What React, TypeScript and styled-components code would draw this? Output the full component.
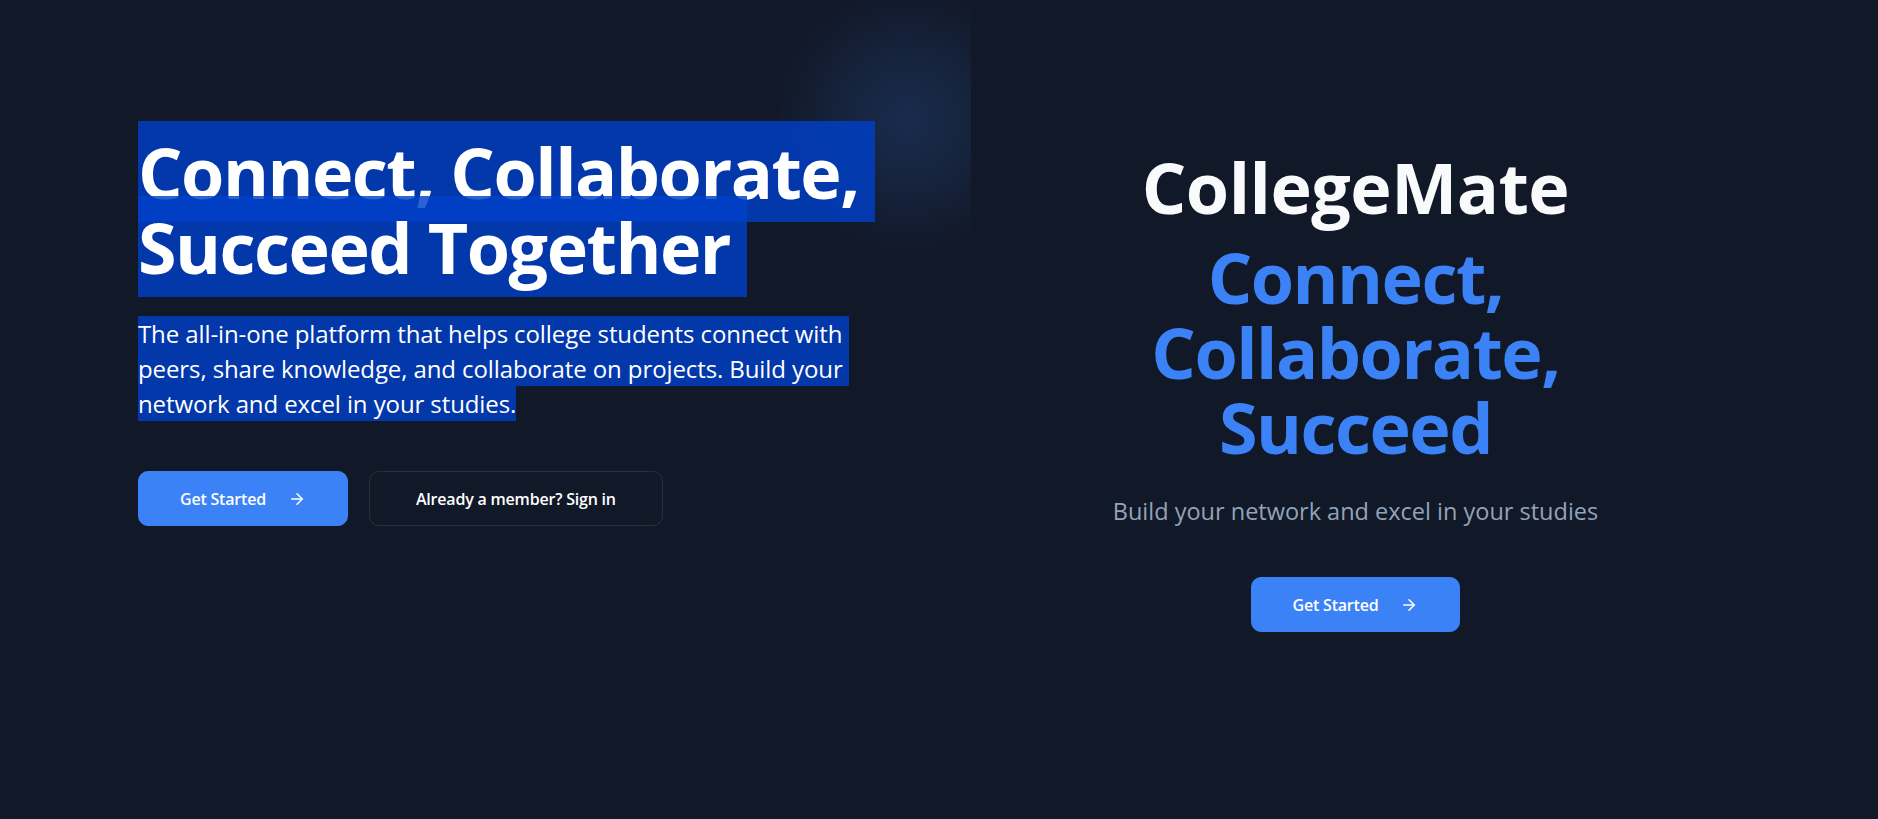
import styled, { createGlobalStyle } from 'styled-components';
import { ArrowRight } from 'lucide-react';

const GlobalStyle = createGlobalStyle`
  html, body {
    margin: 0;
    padding: 0;
    background: #111827;
  }
  body {
    font-family: "Open Sans", "Noto Sans", sans-serif;
    color: #ffffff;
  }
`;

const Page = styled.main`
  min-height: 100vh;
  box-sizing: border-box;
  background: #111827;
  display: grid;
  grid-template-columns: 1fr 1fr;
  column-gap: 64px;
  padding: 0 138px;
  overflow: hidden;
`;

const Intro = styled.section`
  position: relative;
  z-index: 0;
  padding-top: 134px;
`;

const Glow = styled.div`
  position: absolute;
  z-index: -1;
  left: 629px;
  top: -20px;
  width: 280px;
  height: 280px;
  border-radius: 50%;
  background: radial-gradient(circle, rgba(59, 130, 246, 0.19) 0%, rgba(59, 130, 246, 0.08) 42%, rgba(59, 130, 246, 0) 70%);
`;

const Headline = styled.h1`
  margin: 0;
  font-size: 70px;
  line-height: 75px;
  font-weight: 700;
  letter-spacing: -1.5px;
  color: #ffffff;
`;

const Mark = styled.span<{ $pad: number }>`
  background: rgba(0, 64, 200, 0.82);
  padding: ${(p) => p.$pad}px 0;
  white-space: pre;
`;

const Lead = styled.p`
  margin: 32px 0 0;
  font-size: 24px;
  line-height: 35px;
  letter-spacing: -0.1px;
  color: #ffffff;
`;

const Actions = styled.div`
  display: flex;
  gap: 21px;
  margin-top: 50px;
`;

const Button = styled.button<{ $variant?: 'primary' | 'ghost' }>`
  display: inline-flex;
  align-items: center;
  justify-content: center;
  gap: 22px;
  height: 55px;
  padding: 0 ${(p) => (p.$variant === 'ghost' ? 46 : 41)}px;
  box-sizing: border-box;
  border-radius: 10px;
  font-family: inherit;
  font-size: 16px;
  font-weight: 600;
  letter-spacing: -0.2px;
  color: #ffffff;
  cursor: pointer;
  background: ${(p) => (p.$variant === 'ghost' ? 'transparent' : '#3b82f6')};
  border: 1px solid ${(p) => (p.$variant === 'ghost' ? 'rgba(255, 255, 255, 0.1)' : '#3b82f6')};
`;

const Showcase = styled.section`
  position: relative;
  z-index: 1;
  background: #111827;
  display: flex;
  flex-direction: column;
  align-items: center;
  text-align: center;
  padding-top: 150px;
`;

const Brand = styled.h2`
  margin: 0;
  font-size: 70px;
  line-height: 75px;
  font-weight: 700;
  letter-spacing: -0.5px;
  color: #f9fafb;
`;

const Tagline = styled.h3`
  margin: 15px 0 0;
  font-size: 70px;
  line-height: 75px;
  font-weight: 700;
  letter-spacing: -1.5px;
  color: #3b82f6;
`;

const Sub = styled.p`
  margin: 30px 0 0;
  font-size: 23.5px;
  line-height: 32px;
  color: #94a3b8;
`;

const ShowcaseAction = styled.div`
  margin-top: 50px;
`;

export default function App() {
  return (
    <>
      <GlobalStyle />
      <Page>
        <Intro>
          <Glow />
          <Headline>
            <Mark $pad={2.5}>Connect, Collaborate, </Mark>
            <br />
            <Mark $pad={2.5}>Succeed Together </Mark>
          </Headline>
          <Lead>
            <Mark $pad={1.2}>The all-in-one platform that helps college students connect with </Mark>
            <br />
            <Mark $pad={1.2}>peers, share knowledge, and collaborate on projects. Build your </Mark>
            <br />
            <Mark $pad={1.2}>network and excel in your studies.</Mark>
          </Lead>
          <Actions>
            <Button>
              Get Started
              <ArrowRight size={18} strokeWidth={2} />
            </Button>
            <Button $variant="ghost">Already a member? Sign in</Button>
          </Actions>
        </Intro>
        <Showcase>
          <Brand>CollegeMate</Brand>
          <Tagline>
            Connect,
            <br />
            Collaborate,
            <br />
            Succeed
          </Tagline>
          <Sub>Build your network and excel in your studies</Sub>
          <ShowcaseAction>
            <Button>
              Get Started
              <ArrowRight size={18} strokeWidth={2} />
            </Button>
          </ShowcaseAction>
        </Showcase>
      </Page>
    </>
  );
}
